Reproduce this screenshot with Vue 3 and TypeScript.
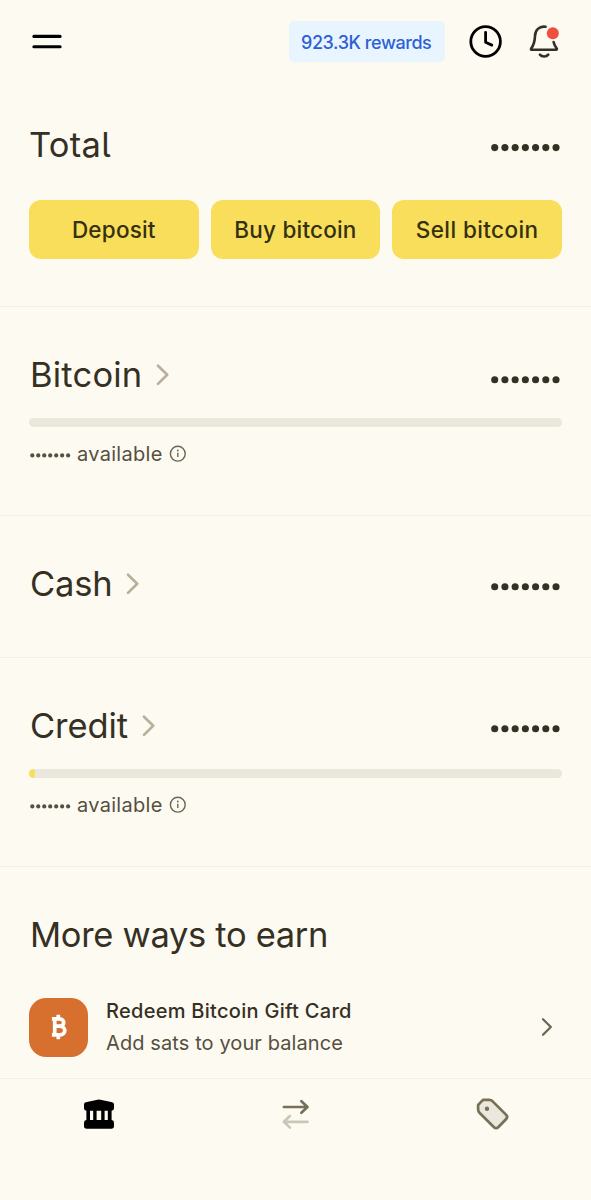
<script setup lang="ts">
interface Account {
  id: string
  name: string
  available: boolean
  fill: number
}

const actions: { label: string; kind: string }[] = [
  { label: 'Deposit', kind: 'deposit' },
  { label: 'Buy bitcoin', kind: 'buy' },
  { label: 'Sell bitcoin', kind: 'sell' },
]

const accounts: Account[] = [
  { id: 'bitcoin', name: 'Bitcoin', available: true, fill: 0 },
  { id: 'cash', name: 'Cash', available: false, fill: 0 },
  { id: 'credit', name: 'Credit', available: true, fill: 1.2 },
]

const dots: number[] = [0, 1, 2, 3, 4, 5, 6]
</script>

<template>
  <main class="screen">
    <section class="overview">
      <header class="topbar">
        <svg class="menu" width="32" height="20" viewBox="0 0 32 20">
          <path d="M2.9 4.4H29.1M2.9 14.8H29.1" />
        </svg>
        <span class="rewards"><span class="rewards-text">923.3K rewards</span></span>
        <svg class="clock" width="34" height="34" viewBox="0 0 34 34">
          <circle cx="16.6" cy="16.5" r="14.8" />
          <path d="M16.6 7.3V17.3L22.8 20.1" />
        </svg>
        <svg class="bell" width="34" height="38" viewBox="0 0 34 38">
          <path d="M17.6 3.8C11 2.9 7.2 7.1 7 12.9C6.8 19.1 5.9 21.9 3.3 25.3C2.7 26.2 3 26.8 3.9 26.8H27.9C28.9 26.8 29.2 26.1 28.6 25.2C27 23.2 26.1 21.6 25.6 19.1" />
          <path d="M11.9 31.7C13.9 34.1 18.3 34.1 20.3 31.7" />
          <circle cx="24.8" cy="10.2" r="6" />
        </svg>
      </header>
      <div class="row total-row">
        <h1 class="title t-total">Total</h1>
        <svg class="mask" width="70" height="8" viewBox="0 0 70 8">
          <circle v-for="d in dots" :key="d" :cx="3.7 + d * 10.22" cy="3.6" r="3.55" />
        </svg>
      </div>
      <div class="actions">
        <button v-for="a in actions" :key="a.kind" type="button" class="action">
          <span :class="'a-' + a.kind">{{ a.label }}</span>
        </button>
      </div>
    </section>

    <section v-for="acc in accounts" :key="acc.id" class="account" :class="acc.id">
      <div class="row">
        <h2 class="title" :class="'t-' + acc.id">{{ acc.name }}</h2>
        <svg class="chevron" width="16" height="24" viewBox="0 0 16 24">
          <path d="M3 2.7L12.2 11.7L3 20.9" />
        </svg>
        <svg class="mask" width="70" height="8" viewBox="0 0 70 8">
          <circle v-for="d in dots" :key="d" :cx="3.7 + d * 10.22" cy="3.7" r="3.55" />
        </svg>
      </div>
      <template v-if="acc.available">
        <div class="bar"><div class="fill" :style="{ width: acc.fill + '%' }"></div></div>
        <div class="available">
          <svg class="small-mask" width="42" height="6" viewBox="0 0 42 6">
            <circle v-for="d in dots" :key="d" :cx="3.3 + d * 5.97" cy="3.4" r="2.1" />
          </svg>
          <span class="available-text">available</span>
          <svg class="info" width="18" height="18" viewBox="0 0 18 18">
            <circle class="ring" cx="8.8" cy="8.7" r="7.4" />
            <path d="M8.8 7.8V12.1" />
            <circle class="point" cx="8.8" cy="5.5" r="0.9" />
          </svg>
        </div>
      </template>
    </section>

    <section class="earn">
      <h2 class="title t-earn">More ways to earn</h2>
      <div class="offer">
        <div class="coin">
          <svg width="20" height="28" viewBox="0 0 20 28">
            <path d="M2.9 5.8H10.5C16.1 5.8 16.1 13.2 10.5 13.2H5.7M10.5 13.2C17.5 13.2 17.5 21.8 10.9 21.8H2.9M5.7 5.8V21.8M9.3 1.8V5M9.3 21.8V26.2" />
          </svg>
        </div>
        <div class="offer-copy">
          <div class="offer-name">Redeem Bitcoin Gift Card</div>
          <div class="offer-note">Add sats to your balance</div>
        </div>
        <svg class="offer-arrow" width="12" height="20" viewBox="0 0 12 20">
          <path d="M2 2.2L9.8 10L2 17.8" />
        </svg>
      </div>
    </section>

    <nav class="tabs">
      <svg width="34" height="34" viewBox="0 0 34 34">
        <path d="M3.8 4.3L15.5 1.7Q17 1.3 18.5 1.7L30.2 4.3Q32 4.7 32 6.5V10.2Q32 12.6 29.6 12.8V22.1Q32 22.3 32 24.7V28.1Q32 30.8 29.3 30.8H4.7Q2 30.8 2 28.1V24.7Q2 22.3 4.4 22.1V12.8Q2 12.6 2 10.2V6.5Q2 4.7 3.8 4.3ZM8 12.8V22.1H11.2V12.8ZM14.6 12.8V22.1H19.2V12.8ZM22.6 12.8V22.1H25.8V12.8Z" fill="#000" fill-rule="evenodd" />
      </svg>
      <svg width="34" height="34" viewBox="0 0 34 34" fill="none" stroke-width="2.7" stroke-linecap="round" stroke-linejoin="round">
        <path d="M4.9 9H28.5M22.4 3.2L28.5 9L22.4 14.8" stroke="#777058" />
        <path d="M28.5 23.8H4.9M10.9 18L4.9 23.8L10.9 29.6" stroke="#cbc7b8" />
      </svg>
      <svg width="34" height="34" viewBox="0 0 34 34">
        <path d="M7 1.9H13.3Q15.1 1.9 16.4 3.1L30.2 16.9Q32.1 19 30.2 21L22.2 29.2Q20.1 31.2 18 29.2L3.7 15Q2.1 13.4 2.1 11.2V7Z" fill="#eae7dc" stroke="#777058" stroke-width="2.7" stroke-linejoin="round" />
        <circle cx="11" cy="10.8" r="2.2" fill="#777058" />
      </svg>
    </nav>
  </main>
</template>

<style>
body {
  margin: 0;
  background: #fefaf2;
}
</style>

<style scoped>
.screen {
  box-sizing: border-box;
  width: 591px;
  height: 1200px;
  overflow: hidden;
  background: #fdfaf2;
  color: #353024;
  font-family: Inter, "Liberation Sans", sans-serif;
  display: flex;
  flex-direction: column;
}
svg {
  display: block;
  flex: none;
}
section {
  box-sizing: border-box;
  padding: 0 29px;
  border-bottom: 1px solid #f1eee5;
  flex: none;
}
.overview {
  height: 307px;
}
.topbar {
  display: flex;
  align-items: center;
  height: 83px;
}
.menu {
  margin-left: 2px;
  fill: none;
  stroke: #000;
  stroke-width: 3.1;
  stroke-linecap: round;
}
.rewards {
  display: flex;
  align-items: center;
  box-sizing: border-box;
  width: 156px;
  height: 41px;
  margin-left: auto;
  padding-left: 12px;
  border-radius: 5px;
  background: #e8f5ff;
  color: #2d5fd6;
  font-size: 18px;
  font-weight: 500;
  letter-spacing: -0.42px;
  white-space: nowrap;
}
.rewards-text {
  margin-top: 1px;
}
.clock {
  margin-left: 24px;
  fill: none;
  stroke: #000;
  stroke-width: 2.8;
  stroke-linecap: round;
  stroke-linejoin: round;
}
.bell {
  margin-left: 25px;
  fill: none;
  stroke: #353024;
  stroke-width: 2.6;
  stroke-linecap: round;
}
.bell circle {
  fill: #ef4f3e;
  stroke: none;
}
.row {
  display: flex;
  align-items: center;
  height: 44px;
}
.total-row {
  margin-top: 40px;
}
.title {
  margin: 0;
  padding-left: 1px;
  font-size: 34.5px;
  line-height: 44px;
  font-weight: 400;
  white-space: nowrap;
}
.t-total {
  padding-left: 0;
  font-feature-settings: "cv05";
  letter-spacing: 0.3px;
}
.t-bitcoin {
  letter-spacing: 0.2px;
}
.t-cash {
  letter-spacing: -0.2px;
}
.t-credit {
  letter-spacing: -0.1px;
}
.t-earn {
  letter-spacing: -0.32px;
}
.mask {
  margin: 5px 1px 0 auto;
  fill: #353024;
}
.actions {
  display: grid;
  grid-template-columns: repeat(3, 1fr);
  gap: 12px;
  margin-top: 33px;
}
.action {
  height: 59px;
  padding: 0 0 1px;
  border: 0;
  border-radius: 12px;
  background: #f8de5a;
  color: #353010;
  font-family: inherit;
  font-size: 22.5px;
  font-weight: 500;
  letter-spacing: 0.2px;
  white-space: nowrap;
}
.a-sell {
  letter-spacing: 0.4px;
}
.account {
  height: 209px;
  padding-top: 46px;
}
.account.cash {
  height: 142px;
}
.account .mask {
  margin-top: 6px;
}
.account.bitcoin .mask {
  margin-top: 10px;
}
.chevron {
  margin-left: 13px;
  fill: none;
  stroke: #b7b19b;
  stroke-width: 2.7;
  stroke-linecap: round;
  stroke-linejoin: round;
}
.bar {
  height: 9px;
  margin-top: 21px;
  border-radius: 5px;
  background: #eae7dc;
  overflow: hidden;
}
.fill {
  height: 9px;
  border-radius: 5px;
  background: #f8de5a;
}
.available {
  display: flex;
  align-items: center;
  height: 26px;
  margin-top: 14px;
  color: #555040;
  font-size: 20px;
  letter-spacing: 0.3px;
}
.small-mask {
  margin-top: 2px;
  fill: #555040;
}
.available-text {
  width: 86px;
  margin-left: 6px;
}
.info {
  margin-left: 6px;
  fill: none;
  stroke: #6c6653;
  stroke-width: 1.4;
}
.info .point {
  fill: #6c6653;
  stroke: none;
}
.earn {
  height: 211px;
  padding-top: 46px;
  border-bottom: 0;
}
.offer {
  display: flex;
  align-items: center;
  margin-top: 38px;
}
.coin {
  display: flex;
  align-items: center;
  justify-content: center;
  width: 59px;
  height: 59px;
  border-radius: 17px;
  background: #d7702f;
}
.coin path {
  fill: none;
  stroke: #fff;
  stroke-width: 3.7;
  stroke-linejoin: round;
}
.offer-copy {
  margin-left: 18px;
  font-size: 20px;
  line-height: 32px;
  white-space: nowrap;
}
.offer-name {
  font-weight: 500;
  letter-spacing: 0.28px;
}
.offer-note {
  color: #555040;
  letter-spacing: 0.1px;
}
.offer-arrow {
  margin-left: auto;
  margin-right: 9px;
  fill: none;
  stroke: #6c6653;
  stroke-width: 2.3;
  stroke-linecap: round;
  stroke-linejoin: round;
}
.tabs {
  display: grid;
  grid-template-columns: repeat(3, 197px);
  justify-items: center;
  box-sizing: border-box;
  height: 122px;
  padding-top: 19px;
  border-top: 1px solid #f1eee5;
}
</style>
